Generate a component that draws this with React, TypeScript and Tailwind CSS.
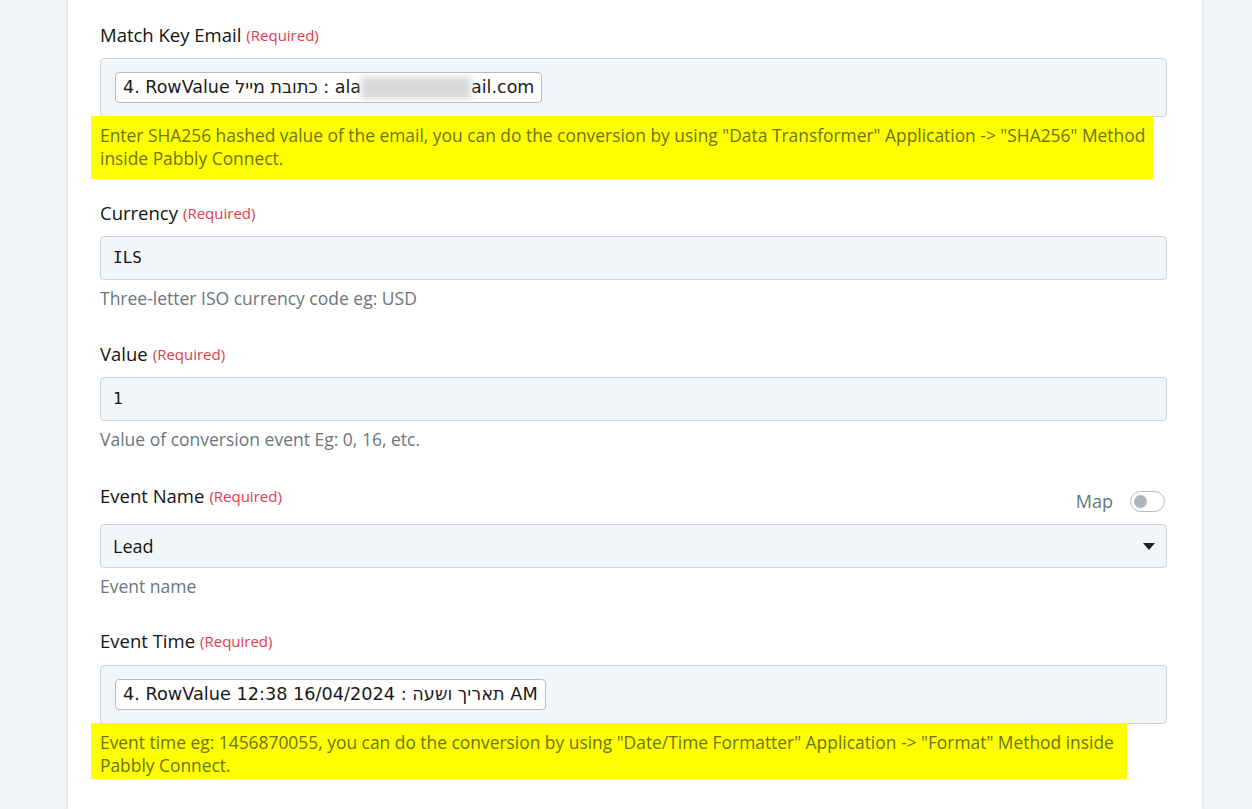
import { ReactNode } from 'react';

const sans = "font-['Segoe_UI','Open_Sans','Noto_Sans',sans-serif]";

function Label({ text }: { text: string }) {
  return (
    <div className="flex items-center h-6 gap-[5px]">
      <span className="text-[18.5px] text-[#111315]">{text}</span>
      <span className="text-[15px] text-[#e5394f]">(Required)</span>
    </div>
  );
}

function Help({ children }: { children: ReactNode }) {
  return <p className="mt-[6px] text-[17.5px] leading-6 text-[#6c757d]">{children}</p>;
}

// yellow hint block, lines are broken by hand
function Note({ lines, width, bottom }: { lines: string[]; width: string; bottom: string }) {
  return (
    <p className={`-mt-px -ml-[9px] ${width} ${bottom} bg-[#ffff00] pl-[9px] pt-[8px] text-[17.4px] leading-[23px] text-[#6c7410] whitespace-nowrap`}>
      {lines.map((l) => (
        <span key={l} className="block">
          {l}
        </span>
      ))}
    </p>
  );
}

function Tag({ children, size }: { children: ReactNode; size: string }) {
  return (
    <span className={`inline-flex items-center h-[31px] px-[7px] bg-white border border-[#b5bac3] rounded-[4px] font-['DejaVu_Sans',sans-serif] ${size} text-[#1a1a1a]`}>
      {children}
    </span>
  );
}

function TagBox({ children }: { children: ReactNode }) {
  return (
    <div className="h-[59px] border border-[#cfd4dc] rounded-[4px] bg-[#f3f6f9] px-[14px] pt-[13px]">
      {children}
    </div>
  );
}

function TextBox({ value }: { value: string }) {
  return (
    <div className="h-[44px] flex items-center border border-[#cfd4dc] rounded-[4px] bg-[#f3f6f9] px-3 font-['DejaVu_Sans_Mono',monospace] text-[16px] font-medium text-[#111]">
      {value}
    </div>
  );
}

export default function App() {
  return (
    <div className={`min-h-screen bg-[#f1f4f9] ${sans}`}>
      <div className="ml-[68px] w-[1134px] min-h-[809px] bg-white shadow-[0_0_3px_rgba(120,140,190,0.35)] pl-8 pr-[35px] pt-[23px]">
        {/* match key */}
        <Label text="Match Key Email" />
        <div className="mt-[11px]">
          <TagBox>
            <Tag size="text-[17.5px]">
              4. RowValue כתובת מייל : ala
              <span className="inline-block w-[110px] h-[22px] bg-[#d9dadc] blur-[3px]" />
              ail.com
            </Tag>
          </TagBox>
        </div>
        <Note
          width="w-[1062px]"
          bottom="pb-[9px]"
          lines={[
            'Enter SHA256 hashed value of the email, you can do the conversion by using "Data Transformer" Application -> "SHA256" Method',
            'inside Pabbly Connect.',
          ]}
        />

        {/* currency */}
        <div className="mt-[22px]">
          <Label text="Currency" />
          <div className="mt-[11px]">
            <TextBox value="ILS" />
          </div>
          <Help>Three-letter ISO currency code eg: USD</Help>
        </div>

        {/* value */}
        <div className="mt-[32px]">
          <Label text="Value" />
          <div className="mt-[11px]">
            <TextBox value="1" />
          </div>
          <Help>Value of conversion event Eg: 0, 16, etc.</Help>
        </div>

        {/* event name */}
        <div className="mt-[33px]">
          <div className="flex items-start justify-between h-[29px]">
            <Label text="Event Name" />
            <div className="flex items-center h-6 mt-[5px] gap-[17px] pr-[2px]">
              <span className="text-[18px] text-[#6c757d]">Map</span>
              <span className="relative w-[35px] h-[21px] rounded-full border border-[#b5bac3] bg-white">
                <span className="absolute left-[3px] top-[3px] w-[13px] h-[13px] rounded-full bg-[#adb5bd]" />
              </span>
            </div>
          </div>
          <div className="mt-[11px] h-[44px] flex items-center justify-between border border-[#cfd4dc] rounded-[4px] bg-[#f3f6f9] pl-3 pr-[11px] text-[18px] text-[#111315]">
            <span>Lead</span>
            <svg width="12" height="7" viewBox="0 0 12 7">
              <path d="M0 0h12L6 7z" fill="#222" />
            </svg>
          </div>
          <Help>Event name</Help>
        </div>

        {/* event time */}
        <div className="mt-[31px]">
          <Label text="Event Time" />
          <div className="mt-[12px]">
            <TagBox>
              <Tag size="text-[17.7px]">4. RowValue תאריך ושעה : 16/04/2024 12:38 AM</Tag>
            </TagBox>
          </div>
          <Note
            width="w-[1036px]"
            bottom="pb-[2px]"
            lines={[
              'Event time eg: 1456870055, you can do the conversion by using "Date/Time Formatter" Application -> "Format" Method inside',
              'Pabbly Connect.',
            ]}
          />
        </div>
      </div>
    </div>
  );
}
